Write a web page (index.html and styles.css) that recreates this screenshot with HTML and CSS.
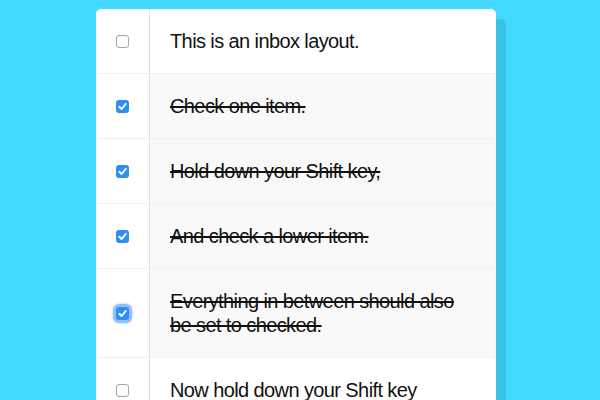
FILE: index.html
```html
<!DOCTYPE html>
<html>
<head>
<meta charset="utf-8">
<link rel="stylesheet" href="styles.css">
</head>
<body>
<div class="inbox">
  <div class="item">
    <span class="box"></span>
    <p>This is an inbox layout.</p>
  </div>
  <div class="item done">
    <span class="box on"><svg viewBox="0 0 13 13"><path d="M3.3 6.8 L5.6 9 L9.8 3.9"/></svg></span>
    <p>Check one item.</p>
  </div>
  <div class="item done">
    <span class="box on"><svg viewBox="0 0 13 13"><path d="M3.3 6.8 L5.6 9 L9.8 3.9"/></svg></span>
    <p>Hold down your Shift key,</p>
  </div>
  <div class="item done">
    <span class="box on"><svg viewBox="0 0 13 13"><path d="M3.3 6.8 L5.6 9 L9.8 3.9"/></svg></span>
    <p>And check a lower item.</p>
  </div>
  <div class="item done">
    <span class="box on focus"><svg viewBox="0 0 13 13"><path d="M3.3 6.8 L5.6 9 L9.8 3.9"/></svg></span>
    <p>Everything in between should also be set to checked.</p>
  </div>
  <div class="item">
    <span class="box"></span>
    <p>Now hold down your Shift key</p>
  </div>
</div>
</body>
</html>
```

FILE: styles.css
```css
html {
  background: #42d8ff;
}
body {
  margin: 0;
  padding-top: 9px;
  height: 391px;
  overflow: hidden;
}
.inbox {
  width: 400px;
  margin-left: 96px;
  background: #fff;
  border-radius: 5px;
  box-shadow: 10px 10px 0 rgba(0, 0, 0, 0.1);
}
.item {
  display: flex;
  align-items: center;
  border-bottom: 1px solid #f1f1f1;
}
.item:last-child {
  border-bottom: 0;
}
.box {
  flex: none;
  box-sizing: border-box;
  width: 13px;
  height: 13px;
  margin: 20px;
  border: 1px solid #a5a5a5;
  border-radius: 3px;
  background: #fff;
  display: flex;
}
.box.on {
  border: 0;
  background: #2f8ef6;
}
.box.focus {
  box-shadow: 0 0 0 3px rgba(100, 165, 250, 0.6), 0 0 2px 4px rgba(100, 165, 250, 0.25);
}
.box svg {
  width: 13px;
  height: 13px;
}
.box path {
  fill: none;
  stroke: #fff;
  stroke-width: 1.9;
  stroke-linecap: round;
  stroke-linejoin: round;
}
p {
  margin: 0;
  padding: 20px;
  flex: 1;
  font-family: "Liberation Sans", Arial, sans-serif;
  font-size: 20px;
  line-height: 24px;
  letter-spacing: -0.6px;
  color: #111;
  border-left: 1px solid #d1e2ff;
}
.done p {
  background: #f9f9f9;
  text-decoration: line-through;
  text-decoration-thickness: 2px;
}
```
